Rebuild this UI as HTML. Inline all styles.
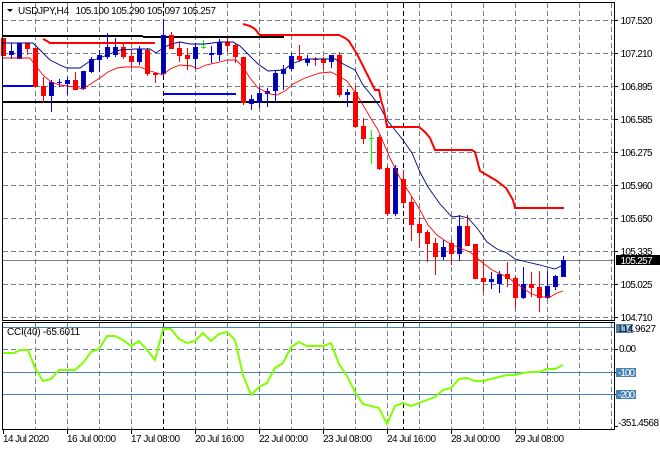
<!DOCTYPE html>
<html><head><meta charset="utf-8"><style>
html,body{margin:0;padding:0;background:#fff;width:660px;height:450px;overflow:hidden}
svg{display:block}
text{font-family:"Liberation Sans",sans-serif;font-size:10px;fill:#000}
</style></head><body>
<svg width="660" height="450" viewBox="0 0 660 450" xmlns="http://www.w3.org/2000/svg">
<rect width="660" height="450" fill="#fff"/>
<g shape-rendering="crispEdges">
<path d="M35.5 3V320M67.5 3V320M99.5 3V320M131.5 3V320M195.5 3V320M227.5 3V320M259.5 3V320M291.5 3V320M323.5 3V320M355.5 3V320M387.5 3V320M419.5 3V320M451.5 3V320M483.5 3V320M515.5 3V320M547.5 3V320M579.5 3V320M611.5 3V320M35.5 323V429M67.5 323V429M99.5 323V429M131.5 323V429M195.5 323V429M227.5 323V429M259.5 323V429M291.5 323V429M323.5 323V429M355.5 323V429M387.5 323V429M419.5 323V429M451.5 323V429M483.5 323V429M515.5 323V429M547.5 323V429M579.5 323V429M611.5 323V429M3 20.5H614M3 53.5H614M3 86.5H614M3 119.5H614M3 152.5H614M3 185.5H614M3 218.5H614M3 251.5H614M3 284.5H614M3 317.5H614M3 349.5H614" stroke="#708090" stroke-width="1" stroke-dasharray="5 3" fill="none"/>
<path d="M163.5 3V320M403.5 3V320M163.5 323V429M403.5 323V429" stroke="#000" stroke-width="1" stroke-dasharray="5 3" fill="none"/>
<path d="M3 260.5H614" stroke="#708090" stroke-width="1"/>
<path d="M3 327.5H614M3 372.5H614M3 394.5H614" stroke="#4682B4" stroke-width="1"/>
<path d="M3 36H143M143 37H284M3 102H380" stroke="#000" stroke-width="2" fill="none"/>
<path d="M3 86H34M163 94H236" stroke="#0000ff" stroke-width="2" fill="none"/>
<!-- red wicks -->
<path stroke="#ff0000" stroke-width="1" fill="none" d="M27.5 43V55M43.5 77V103M75.5 72V90M123.5 43V59M131.5 50V67M147.5 48V76M155.5 72V83M171.5 32V49M179.5 42V62M187.5 48V70M227.5 38V52M235.5 43V63M243.5 57V105M299.5 45V62M315.5 57V66M323.5 57V70M339.5 52V97M355.5 86V128M363.5 118V144M379.5 135V170M387.5 166V216M403.5 170V206M411.5 197V241M419.5 217V248M427.5 230V262M435.5 238V275M451.5 240V265M467.5 215V246M475.5 244V279M483.5 260V293M507.5 262V287M515.5 276V309M531.5 272V297M539.5 271V312"/>
<!-- red bodies -->
<path stroke="#ff0000" stroke-width="5" fill="none" d="M3.5 38V56M27.5 43V49M35.5 48V87M43.5 86V96M75.5 80V90M123.5 47V57M131.5 56V62M147.5 50V74M155.5 73V75M171.5 35V49M179.5 48V56M187.5 55V59M227.5 42V46M235.5 45V57M243.5 57V103M299.5 56V60M315.5 59V60M323.5 59V63M339.5 55V95M355.5 92V127M363.5 126V139M379.5 137V169M387.5 168V214M403.5 179V203M411.5 202V225M419.5 224V233M427.5 232V244M435.5 243V257M451.5 243V254M467.5 226V246M475.5 244V279M483.5 278V282M507.5 274V279M515.5 278V298M531.5 284V288M539.5 287V298"/>
<!-- blue wicks -->
<path stroke="#0000ff" stroke-width="1" fill="none" d="M11.5 43V59M19.5 43V59M51.5 80V112M59.5 79V87M67.5 77V95M83.5 71V90M91.5 57V73M99.5 50V72M107.5 33V59M115.5 38V57M139.5 46V65M163.5 19V77M195.5 43V69M211.5 46V63M219.5 39V61M251.5 95V110M259.5 87V108M267.5 88V107M275.5 70V102M283.5 65V90M291.5 53V71M307.5 55V66M331.5 55V68M347.5 89V107M395.5 165V216M443.5 240V260M459.5 215V261M491.5 272V289M499.5 271V293M523.5 267V299M547.5 271V299M555.5 275V290M563.5 256V277"/>
<!-- blue bodies -->
<path stroke="#0000ee" stroke-width="5" fill="none" d="M11.5 51V55M19.5 43V59M51.5 82V96M67.5 80V84M83.5 71V89M91.5 59V72M99.5 55V60M107.5 47V57M115.5 47V55M139.5 49V62M163.5 35V74M195.5 47V59M219.5 42V55M251.5 99V104M259.5 93V103M267.5 91V94M275.5 73V91M283.5 69V74M291.5 56V69M307.5 59V63M331.5 55V62M347.5 92V95M395.5 168V214M443.5 247V257M459.5 226V254M491.5 279V282M499.5 274V284M523.5 284V298M547.5 286V298M555.5 276V287M563.5 260V277"/>
<path stroke="#000090" stroke-width="3" fill="none" d="M11.5 52V54M19.5 44V58M51.5 83V95M67.5 81V83M83.5 72V88M91.5 60V71M99.5 56V59M107.5 48V56M115.5 48V54M139.5 50V61M163.5 36V73M195.5 48V58M219.5 43V54M251.5 100V103M259.5 94V102M267.5 92V93M275.5 74V90M283.5 70V73M291.5 57V68M307.5 60V62M331.5 56V61M347.5 93V94M395.5 169V213M443.5 248V256M459.5 227V253M499.5 275V283M523.5 285V297M547.5 287V297M555.5 277V286M563.5 261V276"/>
<!-- crosses -->
<path stroke="#0000ff" stroke-width="1" fill="none" d="M57 82.5H62M209 54.5H214"/>
<path stroke="#0000ee" stroke-width="2" fill="none" d="M209 54H214"/>
<path stroke="#00ff00" stroke-width="1" fill="none" d="M203.5 40V49M201 47.5H206M371.5 130V164M369 138.5H374"/>
</g>
<!-- moving averages -->
<path fill="none" stroke="#000080" stroke-width="0.9" d="M3 43L33 43L40 50L50 60L60 65L67 68L80 68L90 61L100 58L107 55L120 50L135 49L150 49L156 53L163 48L171 44L180 42L190 44L205 44L220 42L233 42L240 46L248 54L258 64L268 71L284 70L291 64L305 59L335 59L345 65L355 70L363 85L372 96L380 107L387 120L403 140L412 153L420 172L428 187L440 204L452 217L460 216L468 218L477 228L487 242L497 249L507 253L515 259L527 262L540 265L555 269L563 265"/>
<path fill="none" stroke="#ff0000" stroke-width="0.9" d="M3 58L30 58L35 65L43 75L51 82L60 85L75 87L83 89L92 83L100 78L108 72L117 68L125 67L140 67L147 70L157 73L163 75L170 69L180 65L192 66L197 69L206 65L220 62L227 60L236 60L243 67L250 78L258 88L270 94L277 95L285 91L293 84L305 78L320 73L331 72L340 77L347 81L357 95L363 105L370 117L378 130L390 158L400 178L412 197L420 210L428 225L437 235L447 242L457 247L470 252L483 263L492 270L507 277L520 286L530 293L540 297L550 297L557 293L563 291"/>
<!-- thick red -->
<path fill="none" stroke="#ff0000" stroke-width="2" d="M43 39L47 41L50 43L155 43M243 24L250 26L255 29L258 33L260 35L339 35L345 38L349 41L352 46L357 54L362 64L366 72L371 82L375 90L379 90L381 100L384 110L387 127L419 127L425 132L430 138L435 150L472 150L475 152L480 171L497 181L506 188L513 200L515 208L564 208"/>
<!-- CCI -->
<path fill="none" stroke="#7FFF00" stroke-width="2" d="M3 353L14 353L20 350L28 350L35 368L43 381L51 379L59 370L75 370L83 363L91 352L99 349L107 336L115 336L123 340L131 346L139 341L147 350L155 360L163 329L171 329L179 339L187 343L195 341L203 333L211 341L219 334L227 332L235 340L236 344L243 375L251 395L259 387L267 383L275 368L283 363L291 347L299 342L307 346L323 346L331 343L339 364L347 376L355 392L363 404L371 406L379 408L387 424L395 406L403 403L411 406L419 403L427 400L435 397L443 390L451 388L459 379L467 378L475 381L483 381L491 379L499 377L507 375L515 375L523 373L531 372L539 372L547 369L555 369L563 365"/>
<!-- frames -->
<g shape-rendering="crispEdges">
<path stroke="#000" stroke-width="1" fill="none" d="M2.5 2.5H614.5V320.5H2.5ZM2.5 322.5H614.5V429.5H2.5Z"/>
<path stroke="#000" stroke-width="1" fill="none" d="M615 20.5H618M615 53.5H618M615 86.5H618M615 119.5H618M615 152.5H618M615 185.5H618M615 218.5H618M615 251.5H618M615 284.5H618M615 317.5H618M615 349.5H618M615 372.5H618M615 394.5H618M615 426.5H618M3.5 430V434M67.5 430V434M131.5 430V434M195.5 430V434M259.5 430V434M323.5 430V434M387.5 430V434M451.5 430V434M515.5 430V434"/>
<rect x="616" y="255" width="44" height="10" fill="#000"/>
<rect x="616" y="324" width="17" height="9" fill="#4682B4"/>
<rect x="616" y="368" width="20" height="9" fill="#4682B4"/>
<rect x="616" y="390" width="20" height="9" fill="#4682B4"/>
</g>
<path d="M7 9H13L10 12Z" fill="#000"/>
<text x="18" y="14" textLength="51">USDJPY,H4</text>
<text x="75.5" y="14" textLength="140.5">105.100 105.290 105.097 105.257</text>
<text x="7" y="335" textLength="73">CCI(40) -65.6011</text>
<text x="620.5" y="24" textLength="32">107.520</text>
<text x="620.5" y="57" textLength="32">107.210</text>
<text x="620.5" y="90" textLength="32">106.895</text>
<text x="620.5" y="123" textLength="32">106.585</text>
<text x="620.5" y="156" textLength="32">106.275</text>
<text x="620.5" y="189" textLength="32">105.960</text>
<text x="620.5" y="222" textLength="32">105.650</text>
<text x="620.5" y="255" textLength="32">105.335</text>
<text x="620.5" y="264" textLength="32" style="fill:#fff">105.257</text>
<text x="620.5" y="288" textLength="32">105.025</text>
<text x="620.5" y="321" textLength="32">104.710</text>
<text x="619" y="332" textLength="14" style="fill:#fff">100</text>
<text x="618" y="332" textLength="38">114.9627</text>
<text x="619" y="352" textLength="17">0.00</text>
<text x="618" y="376" textLength="17" style="fill:#fff">-100</text>
<text x="618" y="398" textLength="17" style="fill:#fff">-200</text>
<text x="618" y="426" textLength="41">-351.4568</text>
<text x="3" y="442" textLength="46">14 Jul 2020</text>
<text x="67" y="442" textLength="49">16 Jul 00:00</text>
<text x="131" y="442" textLength="49">17 Jul 08:00</text>
<text x="195" y="442" textLength="49">20 Jul 16:00</text>
<text x="259" y="442" textLength="49">22 Jul 00:00</text>
<text x="323" y="442" textLength="49">23 Jul 08:00</text>
<text x="387" y="442" textLength="49">24 Jul 16:00</text>
<text x="451" y="442" textLength="49">28 Jul 00:00</text>
<text x="515" y="442" textLength="49">29 Jul 08:00</text>
</svg>
</body></html>
